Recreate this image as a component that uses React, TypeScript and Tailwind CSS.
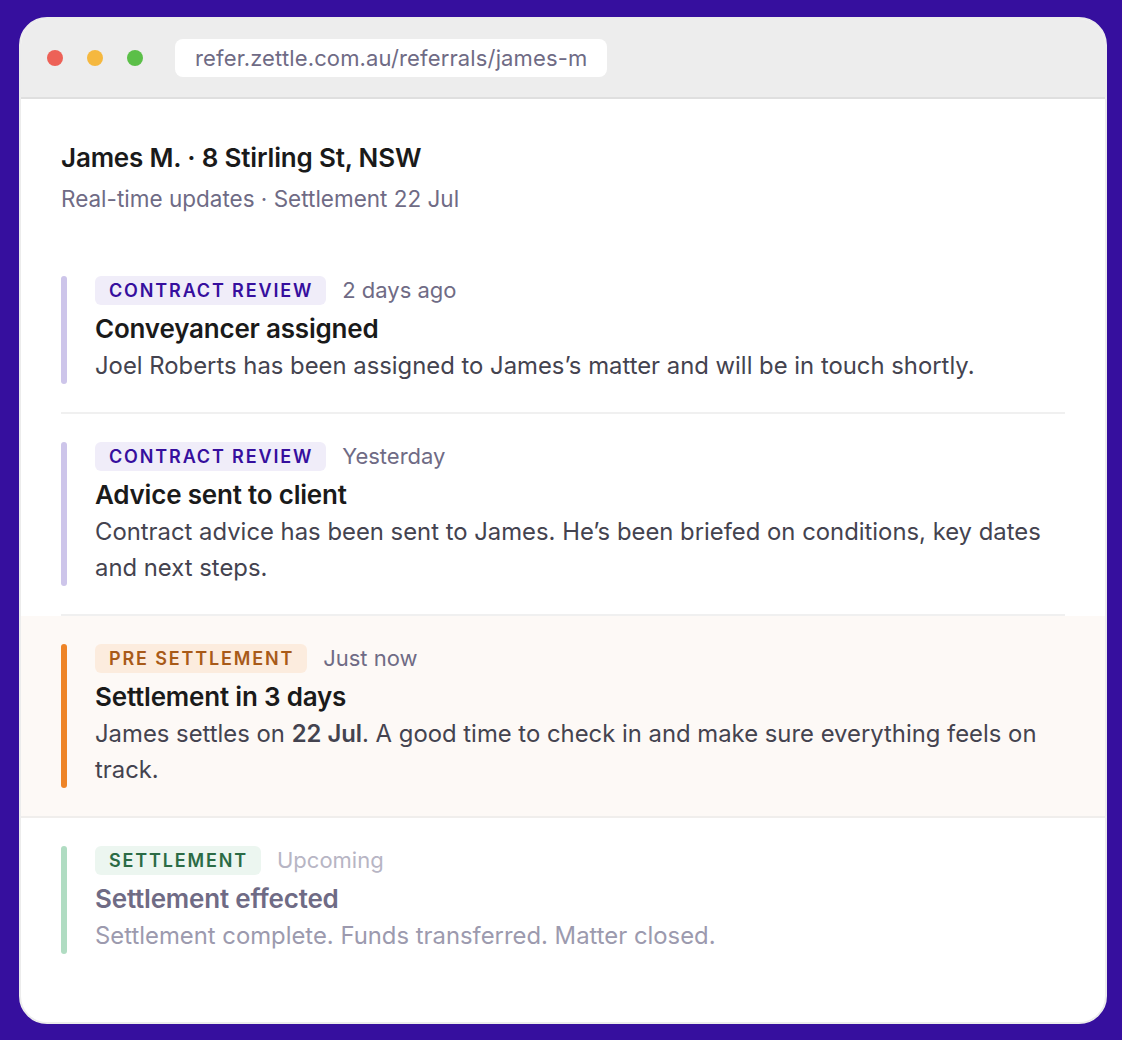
const inter = "font-['Inter',sans-serif]";

type Item = {
  tag: string;
  when: string;
  title: string;
  body: React.ReactNode;
  bar: string;
  tagClass: string;
  whenClass: string;
  titleClass: string;
  bodyClass: string;
  wrap: string;
};

const items: Item[] = [
  {
    tag: "CONTRACT REVIEW",
    when: "2 days ago",
    title: "Conveyancer assigned",
    body: "Joel Roberts has been assigned to James’s matter and will be in touch shortly.",
    bar: "bg-[#cdc5ea]",
    tagClass: "bg-[#f0edf9] text-[#360f9e]",
    whenClass: "text-[#6f6b85]",
    titleClass: "text-[#1a1a1a]",
    bodyClass: "text-[#44434f]",
    wrap: "mx-[40px] py-[28px] border-b-2 border-[#f0f0f0]",
  },
  {
    tag: "CONTRACT REVIEW",
    when: "Yesterday",
    title: "Advice sent to client",
    body: "Contract advice has been sent to James. He’s been briefed on conditions, key dates and next steps.",
    bar: "bg-[#cdc5ea]",
    tagClass: "bg-[#f0edf9] text-[#360f9e]",
    whenClass: "text-[#6f6b85]",
    titleClass: "text-[#1a1a1a]",
    bodyClass: "text-[#44434f]",
    wrap: "mx-[40px] py-[28px] border-b-2 border-[#f0f0f0]",
  },
  {
    tag: "PRE SETTLEMENT",
    when: "Just now",
    title: "Settlement in 3 days",
    body: (
      <>
        James settles on <strong className="font-semibold">22 Jul</strong>. A good time to check in and make sure everything feels on track.
      </>
    ),
    bar: "bg-[#ee8427]",
    tagClass: "bg-[#fcecde] text-[#a85a18]",
    whenClass: "text-[#6f6b85]",
    titleClass: "text-[#1a1a1a]",
    bodyClass: "text-[#44434f]",
    wrap: "bg-[#fdf9f6] border-b-2 border-[#f0eeec] px-[40px] py-[28px]",
  },
  {
    tag: "SETTLEMENT",
    when: "Upcoming",
    title: "Settlement effected",
    body: "Settlement complete. Funds transferred. Matter closed.",
    bar: "bg-[#b0dcc2]",
    tagClass: "bg-[#ecf6f0] text-[#2b6b45]",
    whenClass: "text-[#b7b5c4]",
    titleClass: "text-[#6f6b85]",
    bodyClass: "text-[#9c9aae]",
    wrap: "mx-[40px] pt-[28px]",
  },
];

function Row({ item }: { item: Item }) {
  return (
    <div className={item.wrap}>
      <div className="flex gap-[28px]">
        <div className={`w-[6px] shrink-0 rounded-[3px] ${item.bar}`} />
        <div className="flex-1 min-w-0">
          <div className="flex items-center gap-[16px]">
            <span className={`h-[29px] pl-[14px] pr-[13px] flex items-center rounded-[6px] text-[18px] font-semibold tracking-[1.85px] ${item.tagClass}`}>
              {item.tag}
            </span>
            <span className={`text-[22px] leading-[29px] ${item.whenClass}`}>{item.when}</span>
          </div>
          <h3 className={`mt-[6px] text-[26px] leading-[36px] font-semibold tracking-[-0.2px] ${item.titleClass}`}>{item.title}</h3>
          <p className={`mt-[1px] text-[23.85px] leading-[36px] ${item.bodyClass}`}>{item.body}</p>
        </div>
      </div>
    </div>
  );
}

export default function App() {
  return (
    <div className={`w-[1122px] h-[1040px] bg-[#360f9e] pt-[17px] pl-[19px] ${inter}`}>
      <div className="w-[1088px] h-[1007px] bg-white rounded-[28px] border-2 border-[#ececec] overflow-hidden">
        <div className="h-[81px] bg-[#ededed] border-b-2 border-[#dfdfdf] flex items-center pl-[26px] -mt-[1px]">
          <div className="flex gap-[24px]">
            <span className="w-[16px] h-[16px] rounded-full bg-[#ed6157]" />
            <span className="w-[16px] h-[16px] rounded-full bg-[#f5b83f]" />
            <span className="w-[16px] h-[16px] rounded-full bg-[#5bbf48]" />
          </div>
          <div className="ml-[32px] h-[38px] px-[20px] pt-[1px] bg-white rounded-[8px] flex items-center text-[22px] tracking-[0.14px] text-[#6f6b85]">
            refer.zettle.com.au/referrals/james-m
          </div>
        </div>
        <div className="px-[40px] pt-[40px] pb-[34px]">
          <h1 className="text-[26px] leading-[38px] font-semibold tracking-[-0.18px] text-[#1a1a1a]">James M. · 8 Stirling St, NSW</h1>
          <p className="mt-[7px] text-[22.5px] leading-[30px] text-[#6f6b85]">Real-time updates · Settlement 22 Jul</p>
        </div>
        {items.map((item) => (
          <Row key={item.title} item={item} />
        ))}
      </div>
    </div>
  );
}
